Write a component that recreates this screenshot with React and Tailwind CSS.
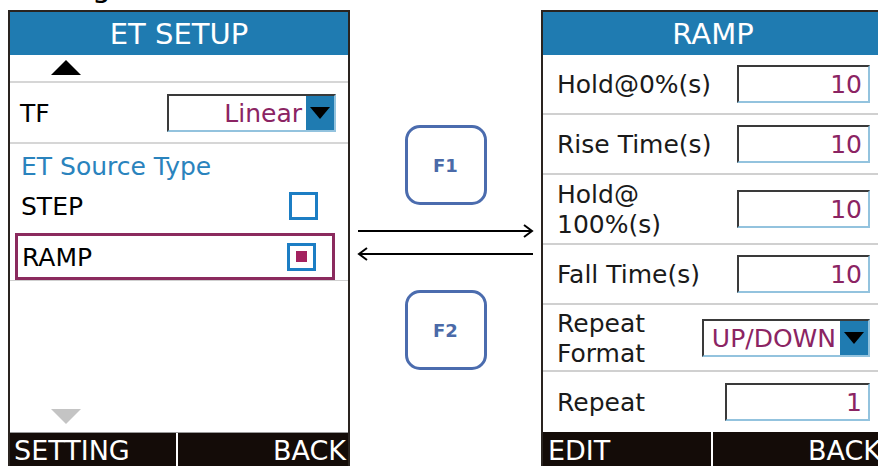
import React from 'react';

const DownCaret = () => (
    <div className="w-[28px] h-full bg-[#1f7bb1] flex items-center justify-center">
        <div className="w-0 h-0 border-l-[10px] border-r-[10px] border-t-[12px] border-l-transparent border-r-transparent border-t-black"></div>
    </div>
);

const ValueBox = ({ value, width }) => (
    <div className={`${width} h-[38px] border-2 border-t-[#3a3a3a] border-l-[#3a3a3a] border-b-[#93c3de] border-r-[#93c3de] bg-white flex items-center justify-end pr-[6px] pt-[2px] text-[25px] text-[#8b2463]`}>
        {value}
    </div>
);

const Select = ({ value, width }) => (
    <div className={`${width} h-[38px] border-2 border-t-[#3a3a3a] border-l-[#3a3a3a] border-b-[#93c3de] border-r-[#93c3de] bg-white flex items-stretch`}>
        <div className="flex-1 flex items-center justify-end pr-[4px] pt-[2px] text-[25px] text-[#8b2463]">{value}</div>
        <DownCaret />
    </div>
);

const Checkbox = ({ checked }) => (
    <div className="w-[29px] h-[28px] border-[3px] border-[#1c7ec4] flex items-center justify-center">
        {checked && <div className="w-[11px] h-[11px] bg-[#a3225f]"></div>}
    </div>
);

const FKey = ({ label }) => (
    <div className="w-[82px] h-[80px] rounded-[15px] border-[3px] border-[#4b6cae] flex items-center justify-center text-[18px] font-bold text-[#4b6aa8]">
        {label}
    </div>
);

const EtSetup = () => (
    <div className="w-[342px] h-[460px] shrink-0 ml-[8px] border-2 border-[#2a2420] flex flex-col overflow-hidden">
        <div className="h-[43px] bg-[#1f7bb1] text-white text-[29px] flex items-center justify-center pt-[3px]">ET SETUP</div>
        <div className="h-[28px] border-b-2 border-[#d6d6d6] pl-[41px] pt-[5px]">
            <div className="w-0 h-0 border-l-[15px] border-r-[15px] border-b-[15px] border-l-transparent border-r-transparent border-b-black"></div>
        </div>
        <div className="h-[61px] border-b-2 border-[#d6d6d6] flex items-center pl-[10px] pr-[12px]">
            <span className="text-[25px] text-black pt-[3px]">TF</span>
            <div className="ml-auto">
                <Select value="Linear" width="w-[169px]" />
            </div>
        </div>
        <div className="h-[44px] flex items-center pl-[11px] pt-[2px] text-[25px] text-[#2a83bd]">ET Source Type</div>
        <div className="h-[35px] flex items-center pl-[11px] pr-[30px] text-[25px] text-black">
            <span className="pt-[2px]">STEP</span>
            <div className="ml-auto"><Checkbox /></div>
        </div>
        <div className="pt-[10px] border-b border-[#cfcfcf] pl-[5px] pr-[13px]">
            <div className="h-[47px] border-[3px] border-[#8b2a5e] flex items-center pl-[4px] pr-[16px] text-[25px] text-black">
                <span className="pt-[2px]">RAMP</span>
                <div className="ml-auto"><Checkbox checked /></div>
            </div>
        </div>
        <div className="flex-1 flex flex-col justify-end pl-[41px] pb-[8px]">
            <div className="w-0 h-0 border-l-[15px] border-r-[15px] border-t-[15px] border-l-transparent border-r-transparent border-t-[#c4c4c4]"></div>
        </div>
        <div className="h-[36px] shrink-0 border-t border-[#9a9a9a] bg-[#140c08] flex text-white text-[27px] leading-none">
            <div className="w-[168px] flex items-center pl-[4px] border-r-2 border-white">SETTING</div>
            <div className="flex-1 flex items-center justify-end pr-[2px]">BACK</div>
        </div>
    </div>
);

const rows = [
    { label: ['Hold@0%(s)'], h: 'h-[60px]', box: <ValueBox value="10" width="w-[133px]" /> },
    { label: ['Rise Time(s)'], h: 'h-[60px]', box: <ValueBox value="10" width="w-[133px]" /> },
    { label: ['Hold@', '100%(s)'], h: 'h-[70px]', box: <ValueBox value="10" width="w-[133px]" /> },
    { label: ['Fall Time(s)'], h: 'h-[60px]', box: <ValueBox value="10" width="w-[133px]" /> },
    { label: ['Repeat', 'Format'], h: 'h-[67px]', box: <Select value="UP/DOWN" width="w-[168px]" /> },
    { label: ['Repeat'], h: 'h-[60px]', box: <ValueBox value="1" width="w-[145px]" /> },
];

const Ramp = () => (
    <div className="w-[344px] h-[460px] shrink-0 border-2 border-[#2a2420] flex flex-col overflow-hidden">
        <div className="h-[43px] bg-[#1f7bb1] text-white text-[29px] flex items-center justify-center pt-[3px]">RAMP</div>
        {rows.map((r, i) => (
            <div key={i} className={`${r.h} shrink-0 flex items-center pl-[14px] pr-[13px] ${i < rows.length - 1 ? 'border-b-2 border-[#d0d0d0]' : ''}`}>
                <div className="text-[25px] leading-[30px] text-[#1a1a1a] pt-[2px]">
                    {r.label.map((l) => <div key={l}>{l}</div>)}
                </div>
                <div className="ml-auto">{r.box}</div>
            </div>
        ))}
        <div className="h-[36px] shrink-0 bg-[#140c08] flex text-white text-[27px] leading-none">
            <div className="w-[170px] flex items-center pl-[5px] border-r-2 border-white">EDIT</div>
            <div className="flex-1 flex items-center justify-end pr-[2px]">BACK</div>
        </div>
    </div>
);

const App = () => {
    return (
        <div className="w-[878px] h-[466px] bg-white overflow-hidden font-['DejaVu_Sans',sans-serif]">
            {/* clipped heading above the screens */}
            <div className="h-[10px] overflow-hidden">
                <div className="ml-[92px] -mt-[28px] text-[30px] leading-[30px] text-black">g</div>
            </div>
            <div className="flex items-start">
                <EtSetup />
                <div className="w-[191px] shrink-0 flex flex-col items-center pt-[115px]">
                    <FKey label="F1" />
                    <svg width="191" height="40" viewBox="0 0 191 40" className="mt-[19px]">
                        <line x1="8" y1="7" x2="182" y2="7" stroke="black" strokeWidth="2" />
                        <polyline points="174,1 182,7 174,13" fill="none" stroke="black" strokeWidth="2" />
                        <line x1="9" y1="30" x2="183" y2="30" stroke="black" strokeWidth="2" />
                        <polyline points="17,24 9,30 17,36" fill="none" stroke="black" strokeWidth="2" />
                    </svg>
                    <div className="mt-[26px]"><FKey label="F2" /></div>
                </div>
                <Ramp />
            </div>
        </div>
    );
};

export default App;
